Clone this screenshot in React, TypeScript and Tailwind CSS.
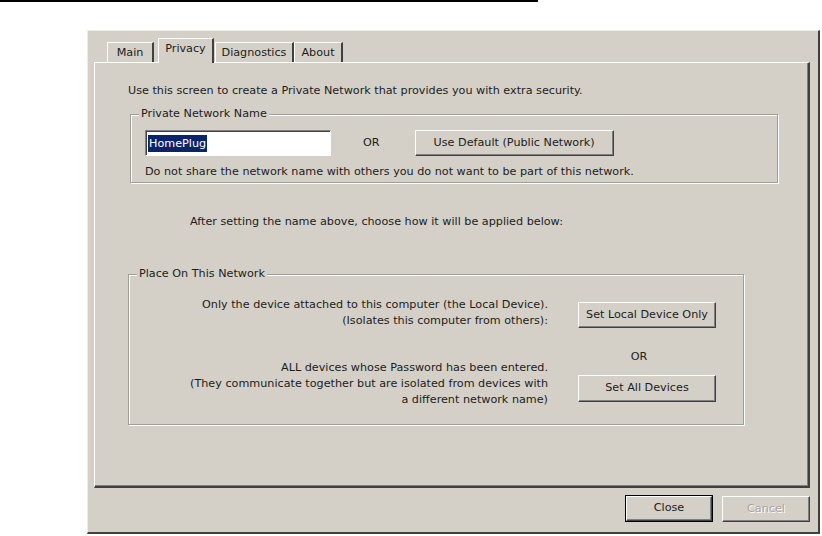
import React from 'react';

const face = 'bg-[#d4d0c8]';
const raised =
    'border border-t-white border-l-white border-r-[#404040] border-b-[#404040] shadow-[inset_-1px_-1px_0_#808080]';

const WinButton: React.FC<{
    label: string;
    className?: string;
    isDefault?: boolean;
    disabled?: boolean;
}> = ({ label, className = '', isDefault, disabled }) => (
    <button
        type="button"
        className={`flex items-center justify-center ${face} ${raised} ${isDefault ? 'ring-1 ring-black' : ''} ${
            disabled ? 'text-[#a7a49d] [text-shadow:1px_1px_0_#fff]' : 'text-[#1c1c1c]'
        } ${className}`}
    >
        {label}
    </button>
);

const Tab: React.FC<{ label: string; width: string; selected?: boolean; className?: string }> = ({
    label,
    width,
    selected,
    className = '',
}) => (
    <div
        className={`flex items-center justify-center ${face} border-t border-l border-t-white border-l-white border-r-2 border-r-[#404040] ${width} ${
            selected ? 'relative z-10 h-[25px] -mb-px pb-[3px]' : 'h-[20px] pt-[1px]'
        } ${className}`}
    >
        {label}
    </div>
);

const GroupBox: React.FC<{ legend: string; className?: string; children: React.ReactNode }> = ({
    legend,
    className = '',
    children,
}) => (
    <fieldset
        className={`border border-[#a09d96] shadow-[inset_1px_1px_0_#fff,1px_1px_0_#fff] ${className}`}
    >
        <legend className={`ml-[8px] px-[2px] leading-[14px] ${face}`}>{legend}</legend>
        {children}
    </fieldset>
);

export default function App() {
    return (
        <div className="min-h-[536px] w-[822px] bg-white font-['DejaVu_Sans',Verdana,sans-serif] text-[11.2px] text-[#1c1c1c]">
            <div className="h-[2px] w-[538px] bg-black" />

            <div
                className={`ml-[87px] mt-[28px] w-[733px] ${face} border-t border-l border-t-[#eeece7] border-l-[#eeece7] border-r-2 border-b-2 border-r-[#404040] border-b-[#404040] pl-[6px] pr-[8px] pt-[7px] pb-[10px]`}
            >
                {/* tabs */}
                <div className="flex items-end h-[24px] pl-[13px]">
                    <Tab label="Main" width="w-[47px]" />
                    <Tab label="Privacy" width="w-[56px]" selected className="ml-[4px]" />
                    <Tab label="Diagnostics" width="w-[79px]" className="ml-[1px]" />
                    <Tab label="About" width="w-[49px]" />
                </div>

                {/* tab panel */}
                <div className="h-[426px] border-t border-l border-t-white border-l-white border-r-2 border-b-2 border-r-[#404040] border-b-[#404040] shadow-[inset_-1px_-1px_0_#808080]">
                    <p className="mt-[21px] ml-[33px] leading-[14px]">
                        Use this screen to create a Private Network that provides you with extra security.
                    </p>

                    <GroupBox legend="Private Network Name" className="mt-[9px] ml-[35px] w-[648px] h-[76px]">
                        <div className="pl-[14px]">
                            <div className="mt-[9px] flex items-center h-[26px]">
                                <div className="w-[186px] h-[26px] bg-white border border-t-[#808080] border-l-[#808080] border-b-white border-r-white shadow-[inset_1px_1px_0_#404040] flex items-center pl-[2px]">
                                    <span className="bg-[#0a246a] text-white leading-[17px] px-[1px]">HomePlug</span>
                                </div>
                                <span className="ml-[32px]">OR</span>
                                <WinButton label="Use Default (Public Network)" className="ml-[35px] w-[199px] h-[26px]" />
                            </div>
                            <p className="mt-[9px] leading-[14px]">
                                Do not share the network name with others you do not want to be part of this network.
                            </p>
                        </div>
                    </GroupBox>

                    <p className="mt-[32px] ml-[95px] leading-[14px]">
                        After setting the name above, choose how it will be applied below:
                    </p>

                    <GroupBox legend="Place On This Network" className="mt-[38px] ml-[33px] w-[616px] h-[158px]">
                        <div className="flex gap-[30px]">
                            <div className="w-[419px] pt-[16px] text-right leading-[16px]">
                                <p>
                                    Only the device attached to this computer (the Local Device).
                                    <br />
                                    (Isolates this computer from others):
                                </p>
                                <p className="mt-[31px]">
                                    ALL devices whose Password has been entered.
                                    <br />
                                    (They communicate together but are isolated from devices with
                                    <br />a different network name)
                                </p>
                            </div>
                            <div className="w-[138px] flex flex-col">
                                <WinButton label="Set Local Device Only" className="mt-[21px] h-[26px] w-full" />
                                <span className="mt-[22px] leading-[14px] text-center pr-[16px]">OR</span>
                                <WinButton label="Set All Devices" className="mt-[11px] h-[27px] w-full" />
                            </div>
                        </div>
                    </GroupBox>
                </div>

                {/* dialog buttons */}
                <div className="mt-[8px] flex justify-end gap-[10px]">
                    <WinButton label="Close" isDefault className="w-[86px] h-[25px]" />
                    <WinButton label="Cancel" disabled className="w-[88px] h-[26px]" />
                </div>
            </div>
        </div>
    );
}
